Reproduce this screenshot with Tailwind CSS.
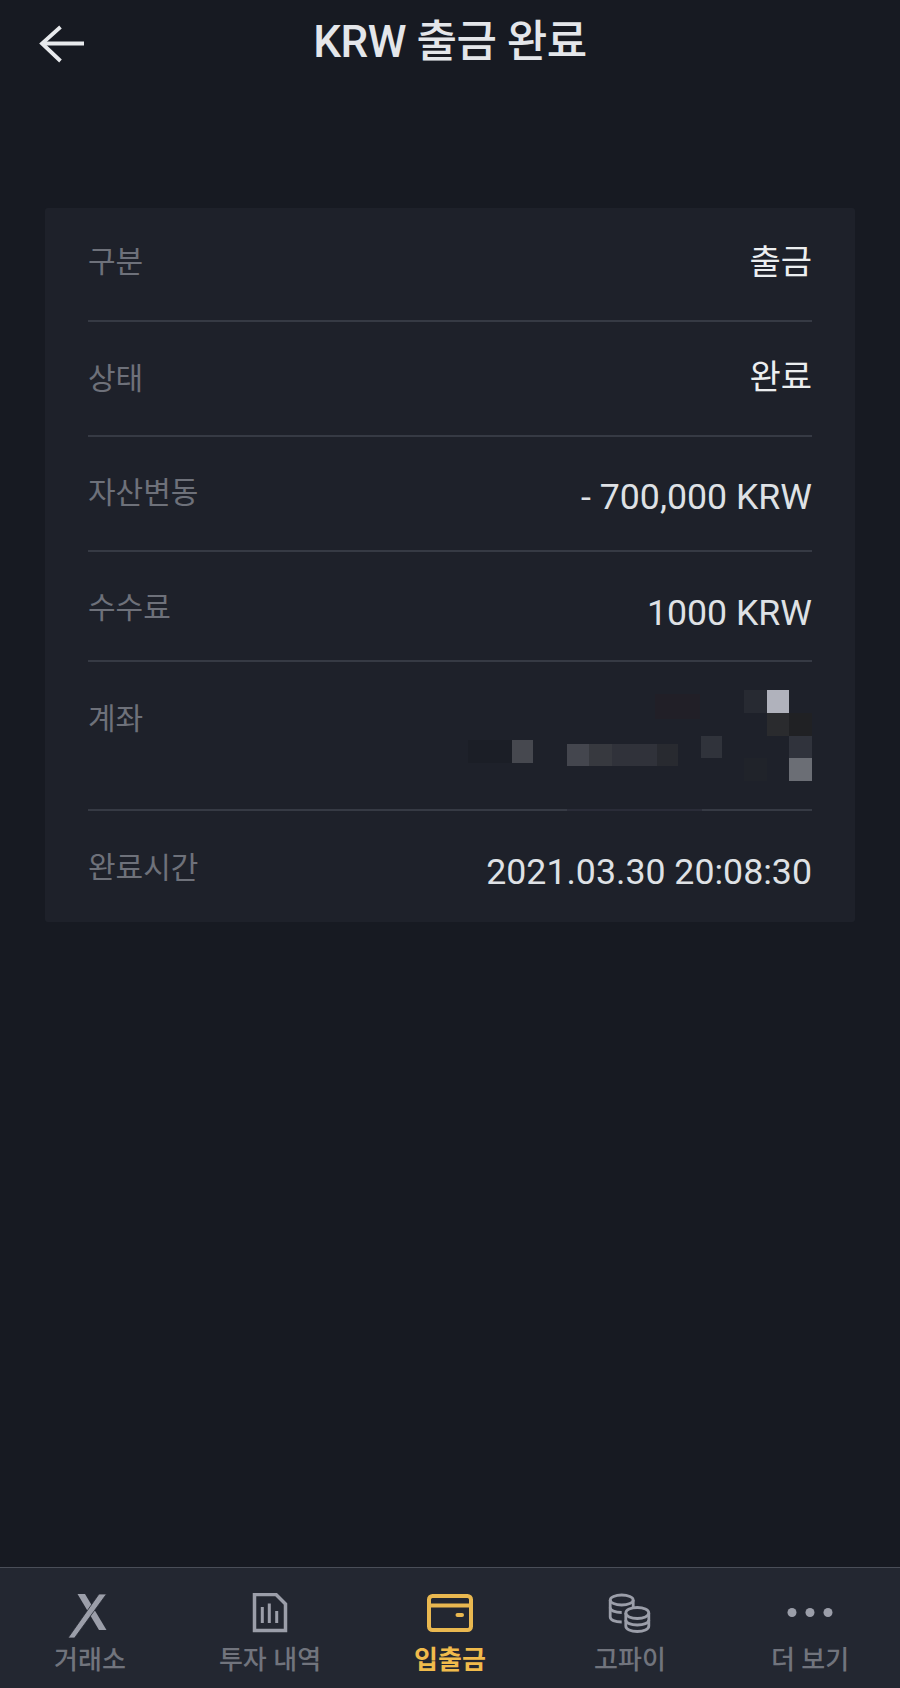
<!DOCTYPE html>
<html lang="ko">
<head>
  <meta charset="UTF-8">
  <meta name="viewport" content="width=device-width, initial-scale=1.0">
  <title>KRW 출금 완료</title>
  <script src="https://cdn.jsdelivr.net/npm/@tailwindcss/browser@4"></script>
</head>
<body class="bg-[#171a22] font-['Roboto','Noto_Sans_CJK_KR',sans-serif]">
  <div class="w-[900px] h-[1688px] flex flex-col">

    <!-- Header -->
    <header class="h-[208px] shrink-0 relative">
      <div class="pt-[14px] text-center text-[44px] leading-[56px] font-medium text-[#e4e6ea] tracking-[-0.5px]">KRW 출금 완료</div>
      <svg class="absolute left-[38px] top-[24px]" width="48" height="42" viewBox="0 0 48 42" fill="none" stroke="#e8eaed" stroke-width="3.8">
        <path d="M46 19.5H4"/>
        <path d="M22.5 3L4 19.5L22.5 37"/>
      </svg>
    </header>

    <!-- Detail card -->
    <main class="flex-1">
      <div class="w-[810px] h-[714px] ml-[45px] px-[43px] bg-[#1e212a] rounded-[3px]">
        <div class="h-[114px] pt-[31px] flex justify-between border-b-2 border-[#363a44]">
          <span class="text-[30px] leading-[46px] text-[#6e717a]">구분</span>
          <span class="text-[34px] leading-[46px] text-[#eceef0]">출금</span>
        </div>
        <div class="h-[115px] pt-[34px] flex justify-between border-b-2 border-[#363a44]">
          <span class="text-[30px] leading-[46px] text-[#6e717a]">상태</span>
          <span class="text-[34px] leading-[42px] text-[#eceef0]">완료</span>
        </div>
        <div class="h-[115px] pt-[33px] flex justify-between border-b-2 border-[#363a44]">
          <span class="text-[30px] leading-[46px] text-[#6e717a]">자산변동</span>
          <span class="text-[35.7px] leading-[54px] text-[#dfe1e5]">- 700,000 KRW</span>
        </div>
        <div class="h-[110px] pt-[33px] flex justify-between border-b-2 border-[#363a44]">
          <span class="text-[30px] leading-[46px] text-[#6e717a]">수수료</span>
          <span class="text-[35.7px] leading-[56px] text-[#dfe1e5]">1000 KRW</span>
        </div>
        <div class="h-[149px] pt-[34px] flex justify-between border-b-2 border-[#363a44] relative">
          <span class="text-[30px] leading-[46px] text-[#6e717a]">계좌</span>
          <!-- blurred account number mosaic -->
          <div class="absolute left-[656px] top-[28px] w-[23px] h-[23px] bg-[#272a32]"></div>
          <div class="absolute left-[679px] top-[28px] w-[22px] h-[23px] bg-[#b0b2bc]"></div>
          <div class="absolute left-[679px] top-[51px] w-[22px] h-[23px] bg-[#2a2b2e]"></div>
          <div class="absolute left-[701px] top-[51px] w-[23px] h-[23px] bg-[#202124]"></div>
          <div class="absolute left-[701px] top-[74px] w-[23px] h-[22px] bg-[#30333c]"></div>
          <div class="absolute left-[701px] top-[96px] w-[23px] h-[23px] bg-[#6b6e75]"></div>
          <div class="absolute left-[656px] top-[96px] w-[23px] h-[23px] bg-[#20232a]"></div>
          <div class="absolute left-[613px] top-[74px] w-[21px] h-[22px] bg-[#30333b]"></div>
          <div class="absolute left-[567px] top-[32px] w-[45px] h-[25px] bg-[#211f27]"></div>
          <div class="absolute left-[380px] top-[78px] w-[44px] h-[23px] bg-[#1b1e26]"></div>
          <div class="absolute left-[424px] top-[78px] w-[21px] h-[23px] bg-[#46484f]"></div>
          <div class="absolute left-[479px] top-[82px] w-[22px] h-[22px] bg-[#44464e]"></div>
          <div class="absolute left-[501px] top-[82px] w-[23px] h-[22px] bg-[#37393f]"></div>
          <div class="absolute left-[524px] top-[82px] w-[45px] h-[22px] bg-[#30323a]"></div>
          <div class="absolute left-[569px] top-[82px] w-[21px] h-[22px] bg-[#282a30]"></div>
          <div class="absolute left-[479px] bottom-[-2px] w-[135px] h-[2px] bg-[#2a2c38]"></div>
        </div>
        <div class="h-[111px] pt-[34px] flex justify-between">
          <span class="text-[30px] leading-[46px] text-[#6e717a]">완료시간</span>
          <span class="text-[35.7px] leading-[54px] text-[#dfe1e5]">2021.03.30 20:08:30</span>
        </div>
      </div>
    </main>

    <!-- Bottom nav -->
    <nav class="h-[121px] shrink-0 flex bg-[#232731] border-t border-[#4a4e58]">
      <div class="flex-1 flex flex-col items-center pt-[25px]">
        <svg width="46" height="46" viewBox="0 0 46 46" fill="#9b9ea9">
          <path d="M10.500 1H18L39.500 37H32z"/>
          <path d="M32 1H39.500L7.500 45H1z" stroke="#232731" stroke-width="0.800"/>
        </svg>
        <span class="mt-[3px] text-[26px] leading-[36px] font-medium text-[#71747d]">거래소</span>
      </div>
      <div class="flex-1 flex flex-col items-center pt-[25px]">
        <svg width="44" height="46" viewBox="0 0 44 46" fill="none" stroke="#9b9ea9">
          <path d="M6.500 1.500H28L37.500 11V37.500H6.500z" stroke-width="3.500"/>
          <path d="M14.300 14V30M21.300 10.500V30M28.700 18V30" stroke-width="3"/>
        </svg>
        <span class="mt-[3px] text-[26px] leading-[36px] font-medium text-[#71747d]">투자 내역</span>
      </div>
      <div class="flex-1 flex flex-col items-center pt-[25px]">
        <svg width="48" height="46" viewBox="0 0 48 46" fill="none" stroke="#e9b850" stroke-width="4">
          <rect x="3" y="3" width="42" height="34" rx="3.500"/>
          <path d="M3 12.500H45"/>
          <path d="M31.500 22H36" stroke-linecap="round"/>
        </svg>
        <span class="mt-[3px] text-[26px] leading-[36px] font-bold text-[#f0bb4c]">입출금</span>
      </div>
      <div class="flex-1 flex flex-col items-center pt-[25px]">
        <svg width="44" height="46" viewBox="0 0 44 46" fill="none" stroke="#9b9ea9" stroke-width="2.800">
          <ellipse cx="13.700" cy="7" rx="11.500" ry="5"/>
          <path d="M2.200 7V24C2.200 27 7 29 13.700 29"/>
          <path d="M2.200 14.500C2.200 17.500 7 19.500 13.700 19.500"/>
          <path d="M25.200 7V14"/>
          <ellipse cx="29.300" cy="20" rx="11.500" ry="5.500"/>
          <path d="M17.800 20V33C17.800 36.500 23 38.500 29.300 38.500C35.600 38.500 40.800 36.500 40.800 33V20"/>
          <path d="M17.800 27C17.800 30 23 32 29.300 32C35.600 32 40.800 30 40.800 27"/>
        </svg>
        <span class="mt-[3px] text-[26px] leading-[36px] font-medium text-[#71747d]">고파이</span>
      </div>
      <div class="flex-1 flex flex-col items-center pt-[25px]">
        <svg width="46" height="46" viewBox="0 0 46 46" fill="#9b9ea9">
          <circle cx="5" cy="19.500" r="4.500"/>
          <circle cx="23" cy="19.500" r="4.500"/>
          <circle cx="41" cy="19.500" r="4.500"/>
        </svg>
        <span class="mt-[3px] text-[26px] leading-[36px] font-medium text-[#71747d]">더 보기</span>
      </div>
    </nav>
  </div>
</body>
</html>
